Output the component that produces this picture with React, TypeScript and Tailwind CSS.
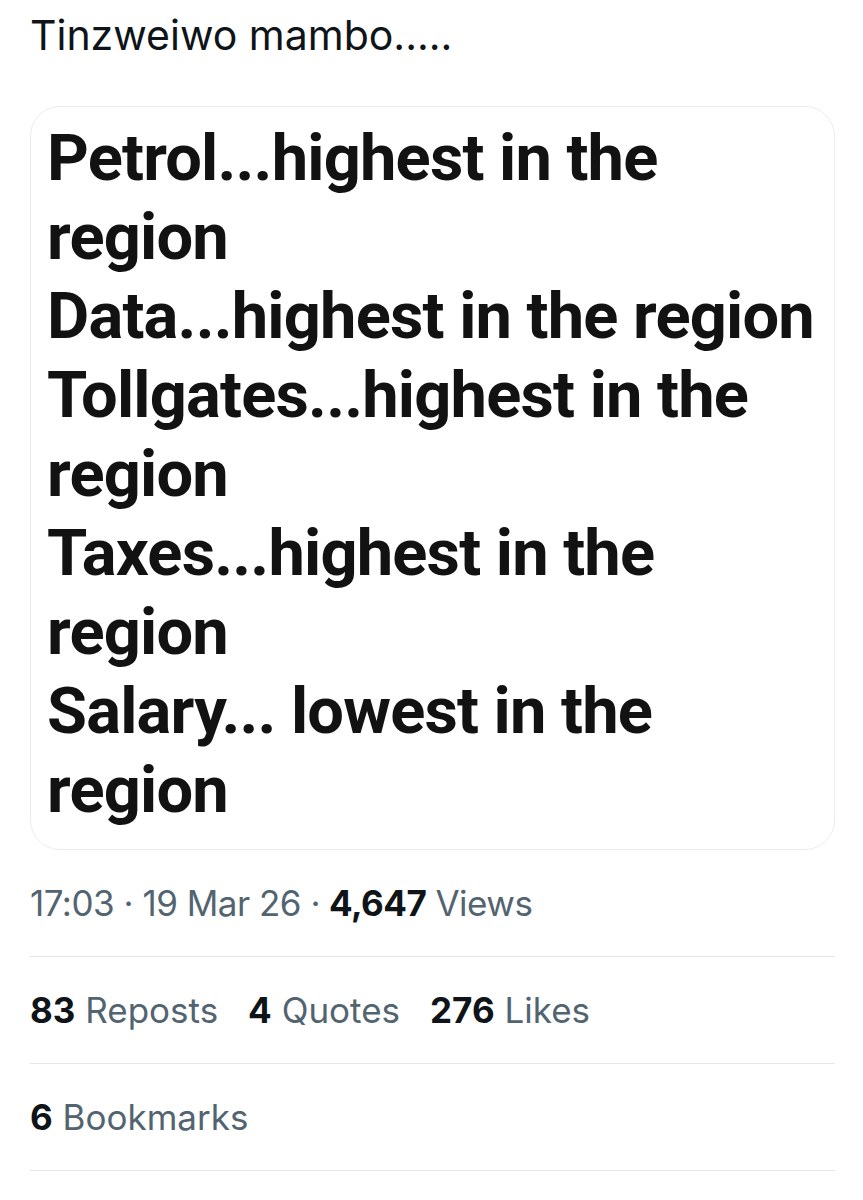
import React from 'react';

const lines = [
  'Petrol...highest in the',
  'region',
  'Data...highest in the region',
  'Tollgates...highest in the',
  'region',
  'Taxes...highest in the',
  'region',
  'Salary... lowest in the',
  'region',
];

const Stat: React.FC<{ value: string; label: string }> = ({ value, label }) => (
  <span className="whitespace-nowrap">
    <span className="font-bold text-[#0f1419]">{value}</span>{' '}
    <span className="text-[#536471]">{label}</span>
  </span>
);

const App: React.FC = () => {
  return (
    <div className="w-[863px] h-[1200px] bg-white px-[30px] font-['Inter',sans-serif] overflow-hidden">
      {/* Tweet text */}
      <div className="h-[106px] pt-[10px] text-[41px] leading-[50px] text-[#0f1419]">
        Tinzweiwo mambo.....
      </div>

      {/* Attached image */}
      <div className="w-[805px] border border-[#e9edef] rounded-[30px] pt-[12px] pb-[19px] pl-[16px]">
        {lines.map((line, i) => (
          <div
            key={i}
            className="whitespace-nowrap font-['Roboto',sans-serif] font-bold text-[65px] leading-[79px] text-[#121212] tracking-[-0.8px]"
          >
            {line}
          </div>
        ))}
      </div>

      {/* Timestamp */}
      <div className="h-[106px] flex items-center text-[35px] tracking-[-0.5px] text-[#536471] whitespace-nowrap">
        <span>17:03 · 19 Mar 26 ·</span>
        <span className="font-bold text-[#0f1419] ml-[9px]">4,647</span>
        <span className="ml-[9px]">Views</span>
      </div>

      <div className="w-[805px] h-px bg-[#e3e7ea]" />

      {/* Engagement */}
      <div className="h-[106px] flex items-center gap-[30px] text-[35px]">
        <Stat value="83" label="Reposts" />
        <Stat value="4" label="Quotes" />
        <Stat value="276" label="Likes" />
      </div>

      <div className="w-[805px] h-px bg-[#e3e7ea]" />

      <div className="h-[106px] flex items-center text-[35px]">
        <Stat value="6" label="Bookmarks" />
      </div>

      <div className="w-[805px] h-px bg-[#e3e7ea]" />
    </div>
  );
};

export default App;
